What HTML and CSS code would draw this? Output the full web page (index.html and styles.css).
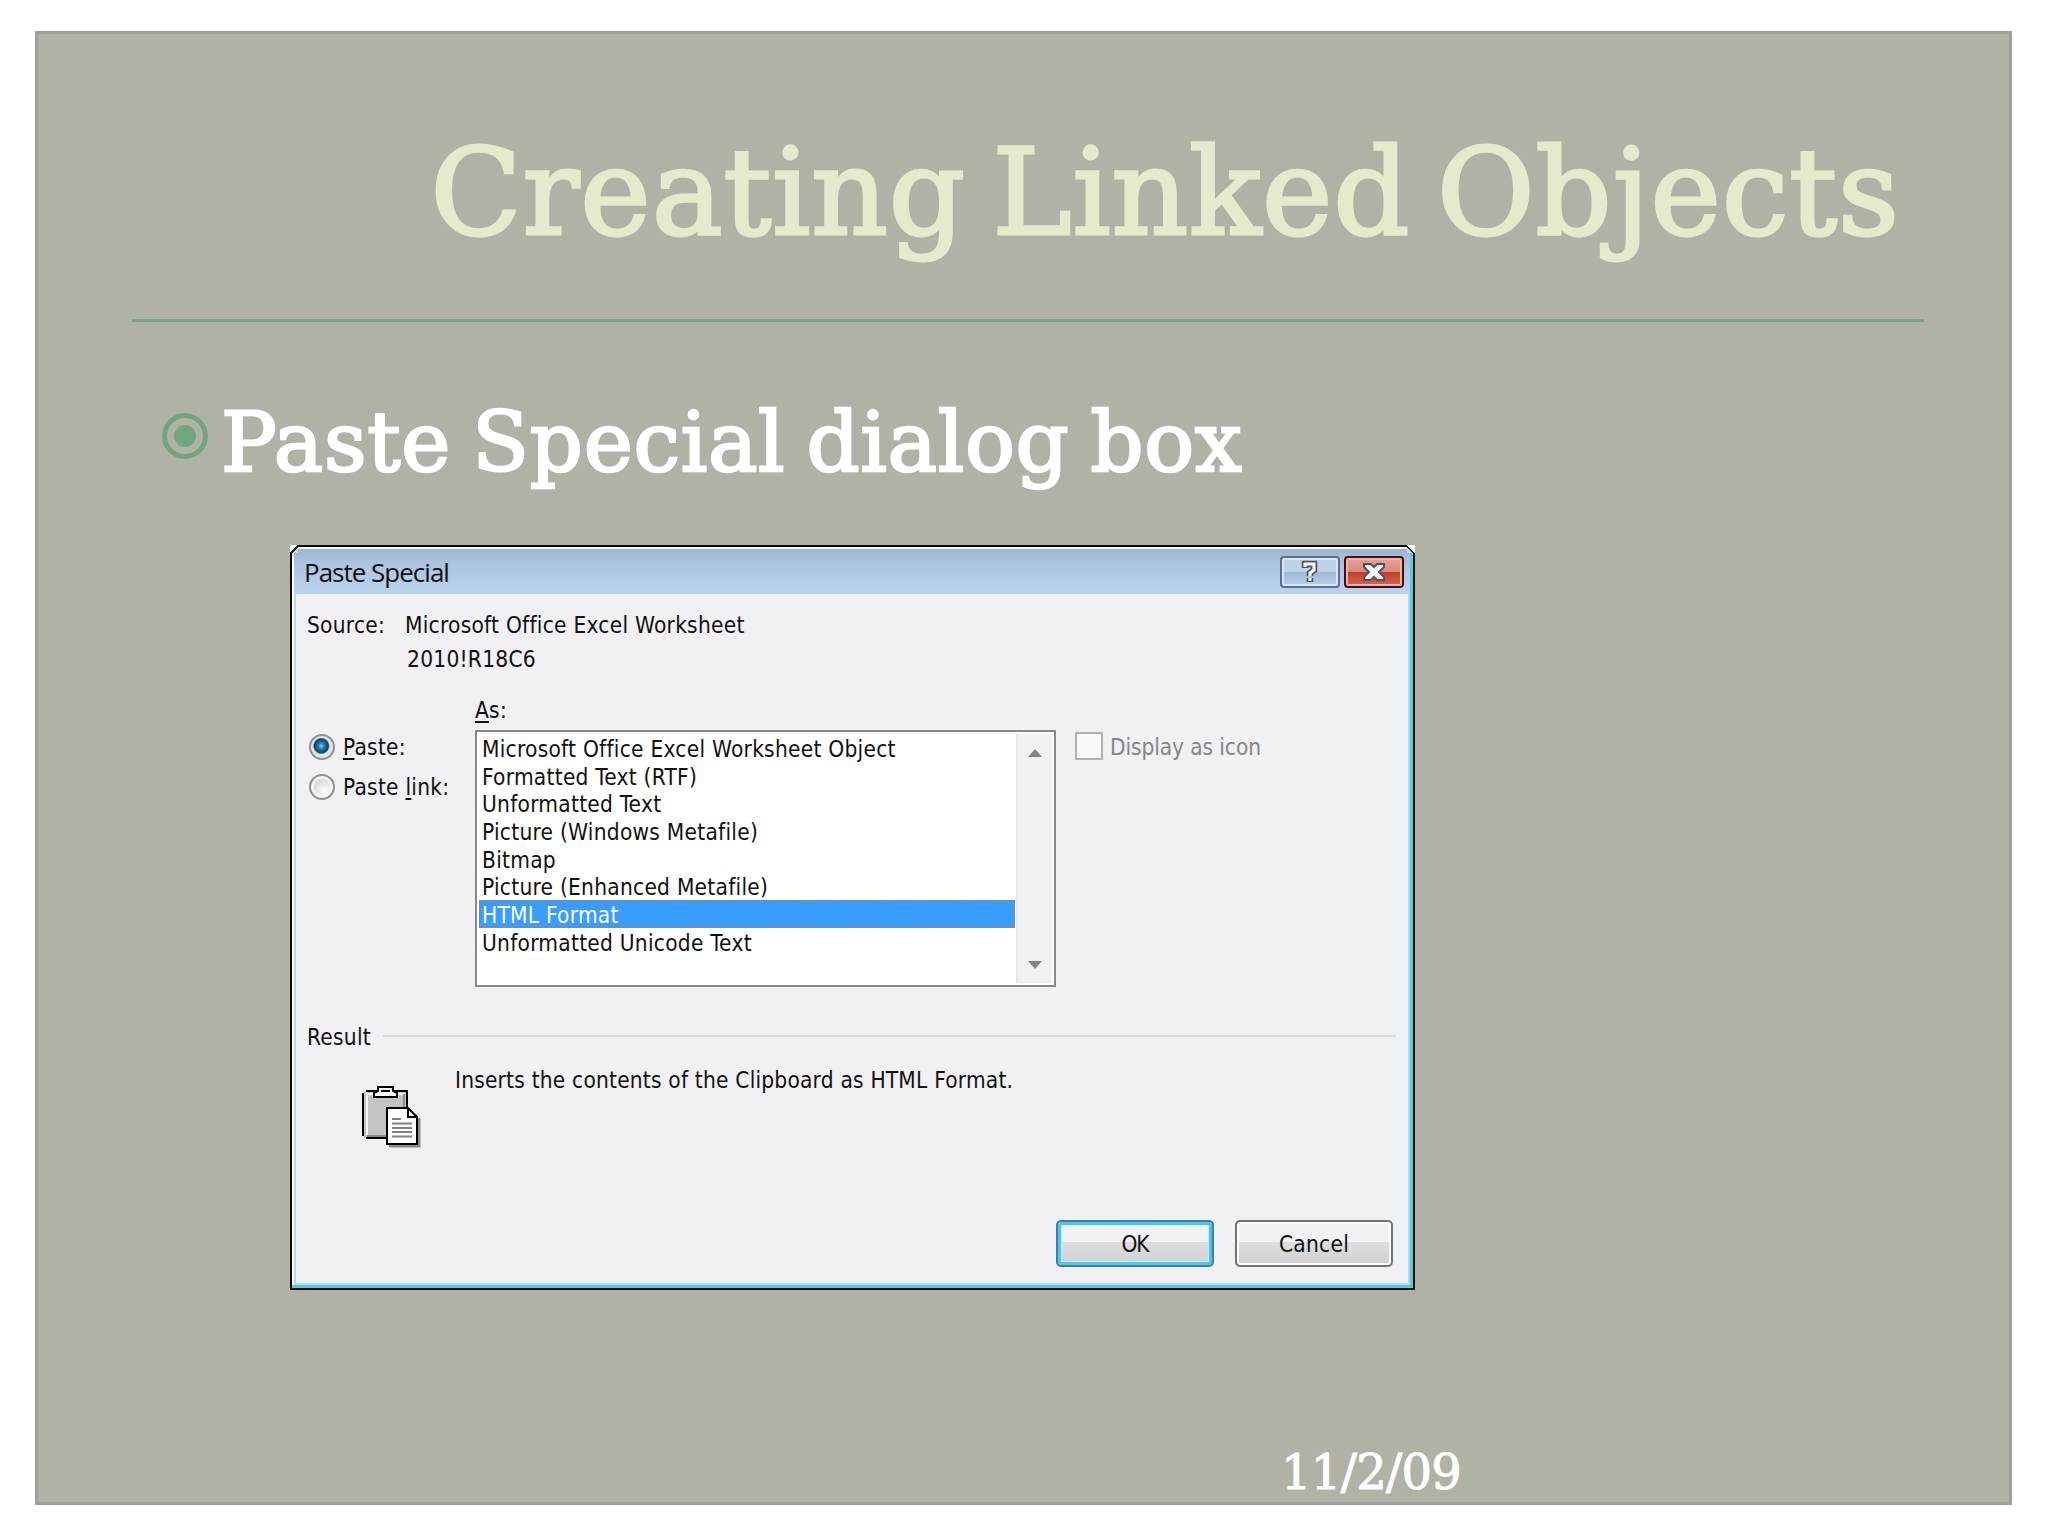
FILE: index.html
```html
<!DOCTYPE html>
<html lang="en">
<head>
  <meta charset="UTF-8">
  <meta name="viewport" content="width=device-width, initial-scale=1.0">
  <title>Creating Linked Objects</title>
  <link rel="stylesheet" href="styles.css">
</head>
<body>
  <main class="slide">
    <h1>Creating Linked Objects</h1>
    <div class="rule"></div>

    <div class="bullet">
      <svg class="bullet-icon" width="46" height="46" viewBox="0 0 46 46">
        <circle cx="23" cy="23" r="20.5" fill="none" stroke="#71a57b" stroke-width="5"/>
        <circle cx="23" cy="23" r="11" fill="#71a57b"/>
      </svg>
      <h2>Paste Special dialog box</h2>
    </div>

    <section class="dialog">
      <i class="corner left"></i>
      <i class="corner right"></i>
      <header class="titlebar">
        <span class="caption">Paste Special</span>
        <button class="win help">
          <svg width="18" height="24" viewBox="0 0 18 24">
            <path d="M4 8V4h9v6l-4 3v3M9 18v4" fill="none" stroke="#4c5566" stroke-width="6.500"/>
            <path d="M4 7V4h9v6l-4 3v3M9 18v3" fill="none" stroke="#fff" stroke-width="3"/>
          </svg>
        </button>
        <button class="win close">
          <svg width="24" height="20" viewBox="0 0 24 20">
            <path d="M2 2h7l3 3 3-3h7v3l-5 5 5 5v3h-7l-3-3-3 3H2v-3l5-5-5-5z" fill="#f3f3f3" stroke="#53535f" stroke-width="2"/>
          </svg>
        </button>
      </header>

      <div class="content">
        <div class="source">
          <span class="source-label">Source:</span>
          <div>
            <div>Microsoft Office Excel Worksheet</div>
            <div class="cell">2010!R18C6</div>
          </div>
        </div>

        <div class="as"><u>A</u>s:</div>

        <div class="options">
          <div class="radios">
            <label><i class="radio checked"></i><span><u>P</u>aste:</span></label>
            <label><i class="radio"></i><span>Paste <u>l</u>ink:</span></label>
          </div>
          <div class="listbox">
            <ul>
              <li>Microsoft Office Excel Worksheet Object</li>
              <li>Formatted Text (RTF)</li>
              <li>Unformatted Text</li>
              <li>Picture (Windows Metafile)</li>
              <li>Bitmap</li>
              <li>Picture (Enhanced Metafile)</li>
              <li class="selected">HTML Format</li>
              <li>Unformatted Unicode Text</li>
            </ul>
            <div class="scrollbar">
              <svg width="14" height="8" viewBox="0 0 14 8"><path d="M7 0l7 8H0z" fill="#858585"/></svg>
              <svg width="14" height="8" viewBox="0 0 14 8"><path d="M0 0h14L7 8z" fill="#858585"/></svg>
            </div>
          </div>
          <label class="display"><i class="checkbox"></i><span>Display as icon</span></label>
        </div>

        <div class="result"><span>Result</span><hr></div>

        <div class="description">
          <svg class="clipboard" width="60" height="64" viewBox="0 0 60 64">
            <path d="M2 6h43v46H2z" fill="#c3c2c4"/>
            <path d="M5 49V8h38" fill="none" stroke="#f4f4f4" stroke-width="2"/>
            <path d="M5 50h37V8" fill="none" stroke="#8d8d8d" stroke-width="2"/>
            <path d="M4 5h41v47H4M1 7v43" fill="none" stroke="#000" stroke-width="2"/>
            <path d="M12 11V7l4-2V1h15v4l4 2v4z" fill="#fff" stroke="#000" stroke-width="2"/>
            <path d="M19 5h9" stroke="#000" stroke-width="2"/>
            <path d="M27 60h30V32" fill="none" stroke="#8a8a8c" stroke-width="3"/>
            <path d="M25 22h21l9 9v27H25z" fill="#fff" stroke="#000" stroke-width="2"/>
            <path d="M46 22v9h9" fill="none" stroke="#000" stroke-width="2"/>
            <path d="M30 33h9M30 37.500h20M30 42h20M30 46h20M30 50.500h20" stroke="#808084" stroke-width="2"/>
          </svg>
          <p>Inserts the contents of the Clipboard as HTML Format.</p>
        </div>

        <div class="actions">
          <button class="btn ok">OK</button>
          <button class="btn">Cancel</button>
        </div>
      </div>
    </section>

    <footer>11/2/09</footer>
  </main>
</body>
</html>
```
FILE: styles.css
```css
* {
  box-sizing: border-box;
}

body {
  margin: 0;
  width: 2048px;
  height: 1536px;
  padding: 31px 36px 0 35px;
  background: #fff;
  overflow: hidden;
}

.slide {
  display: flex;
  flex-direction: column;
  height: 1474px;
  background: #b0b2a6;
  border: 3px solid #9fa09a;
  font-family: "DejaVu Serif", serif;
}

h1, h2, p, ul {
  margin: 0;
  padding: 0;
  font-weight: normal;
}

h1 {
  margin: 99px 109px 0 0;
  text-align: right;
  font-size: 119px;
  line-height: 120px;
  letter-spacing: 0.9px;
  word-spacing: -12px;
  -webkit-text-stroke: 3px #e6eacd;
  color: #e6eacd;
  white-space: nowrap;
}

.rule {
  height: 3px;
  margin: 66px 85px 0 94px;
  background: #7fa18c;
}

.bullet {
  display: flex;
  align-items: flex-start;
  margin: 71px 0 0 124px;
}

.bullet-icon {
  margin: 20px 13px 0 0;
}

h2 {
  font-size: 83px;
  line-height: 100px;
  letter-spacing: 0.7px;
  word-spacing: -6px;
  -webkit-text-stroke: 2.500px #fff;
  color: #fff;
  white-space: nowrap;
}

footer {
  margin: 152px 0 0 1243px;
  font-size: 48px;
  line-height: 60px;
  letter-spacing: -0.7px;
  -webkit-text-stroke: 1px #fff;
  color: #fff;
}

/* Dialog window */
.dialog {
  position: relative;
  width: 1125px;
  height: 746px;
  margin: 52px 0 0 252px;
  padding: 2px 0 0 2px;
  border: 2px solid #0a0a0a;
  background: #fff;
  box-shadow: inset -3px -3px 0 #57cbe2;
  font-family: "DejaVu Sans Condensed", "DejaVu Sans", sans-serif;
  font-stretch: condensed;
  font-size: 22.500px;
  line-height: 28px;
  letter-spacing: 0.25px;
  color: #111;
}

.corner {
  position: absolute;
  top: -2px;
  width: 8px;
  height: 8px;
  background: linear-gradient(135deg, #fff 50%, #222 50%, #222 68%, #c9d9ea 68%);
}

.corner.left {
  left: -2px;
}

.corner.right {
  right: -2px;
  transform: scaleX(-1);
}

.titlebar {
  display: flex;
  align-items: flex-start;
  height: 45px;
  margin-right: 3px;
  padding: 7px 6px 0 10px;
  background: linear-gradient(#9bb6d1, #abc3df 30%, #bcd3ee);
}

.caption {
  flex: 1;
  font-family: "Open Sans", sans-serif;
  font-stretch: normal;
  font-size: 26px;
  line-height: 33px;
  letter-spacing: -1px;
}

.win {
  display: flex;
  align-items: center;
  justify-content: center;
  width: 60px;
  height: 32px;
  padding: 0;
  border: 2px solid #5f7088;
  border-radius: 4px;
  box-shadow: inset 0 0 0 2px #d9e6f4;
}

.help {
  margin-right: 4px;
  background: linear-gradient(#bfd2e8 50%, #9fb7d2 50%, #b7cfe8);
}

.close {
  border-color: #4a0b16;
  box-shadow: inset 0 0 0 2px #eab5aa;
  background: linear-gradient(#e5a396, #d9887a 50%, #bb3d27 50%, #cf6a50);
}

.content {
  display: flex;
  flex-direction: column;
  height: 691px;
  margin-right: 3px;
  padding: 14px 12px 0 11px;
  border: 2px solid #b9d9ea;
  border-top: 0;
  background: #f1f0f2;
}

.source {
  display: flex;
  line-height: 34px;
}

.source-label {
  width: 98px;
}

.cell {
  padding-left: 2px;
}

u {
  text-decoration-thickness: 2px;
  text-underline-offset: 3px;
}

.as {
  margin: 20px 0 6px 168px;
}

.options {
  display: flex;
  align-items: flex-start;
}

.radios {
  width: 168px;
  padding-top: 3px;
}

.radios label {
  display: flex;
  align-items: center;
  height: 40px;
  padding-bottom: 12px;
}

.radio {
  width: 26px;
  height: 26px;
  margin: 0 8px 0 2px;
  border: 2px solid #8e9094;
  border-radius: 50%;
  background: radial-gradient(circle at 60% 65%, #fff, #c9cacc 80%);
  box-shadow: inset 0 0 0 3px #f4f4f4;
}

.radio.checked {
  background: radial-gradient(circle at 47% 45%, #7fd4ee 0, #2582ab 3px, #123f63 7px, #e2e5e8 8.500px);
  box-shadow: none;
}

.listbox {
  display: flex;
  width: 581px;
  height: 257px;
  padding: 2px;
  border: 2px solid #88888c;
  background: #fff;
}

ul {
  flex: 1;
  list-style: none;
}

li {
  height: 27.700px;
  padding: 2px 0 0 3px;
  line-height: 27px;
  white-space: nowrap;
}

.selected {
  margin-right: 1px;
  padding: 1px 0 0 2px;
  border: 1px dashed #c07a3c;
  line-height: 26px;
  background: #399dff;
  color: #fff;
}

.scrollbar {
  display: flex;
  flex-direction: column;
  align-items: center;
  justify-content: space-between;
  width: 36px;
  padding: 15px 0 14px;
  border-left: 2px solid #e6e6e6;
  background: #f1f0f1;
}

.display {
  display: flex;
  align-items: center;
  margin: 0 0 0 19px;
  color: #858588;
}

.display span {
  padding-top: 3px;
  letter-spacing: -0.1px;
}

.checkbox {
  width: 28px;
  height: 28px;
  margin-right: 7px;
  border: 2px solid #b2b2b5;
  background: #f9f8fa;
}

.result {
  display: flex;
  align-items: center;
  margin-top: 36px;
}

hr {
  flex: 1;
  height: 2px;
  margin: 0 0 2px 12px;
  border: 0;
  background: #d6dbde;
}

.description {
  display: flex;
  margin: 15px 0 0 55px;
}

.description p {
  letter-spacing: 0.2px;
}

.clipboard {
  margin: 20px 33px 0 0;
}

.actions {
  display: flex;
  justify-content: flex-end;
  gap: 21px;
  margin-top: 70px;
  padding-right: 3px;
}

.btn {
  width: 158px;
  height: 47px;
  padding: 0;
  border: 2px solid #747478;
  border-radius: 5px;
  background: linear-gradient(#f3f2f3 47%, #dedddf 47%, #d0cfd1);
  box-shadow: inset 0 0 0 2px #fbfbfb;
  font: inherit;
  letter-spacing: inherit;
  color: #111;
}

.ok {
  border-color: #3c7fa8;
  box-shadow: inset 0 0 0 3px #4fc6ee, inset 0 0 0 4px #c5eefa;
  letter-spacing: -1px;
}
```
